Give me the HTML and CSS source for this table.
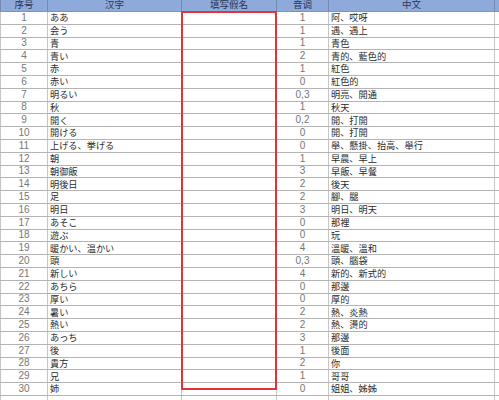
FILE: index.html
```html
<!DOCTYPE html>
<html lang="ja">
<head>
<meta charset="utf-8">
<title>単語表</title>
<link rel="stylesheet" href="styles.css">
</head>
<body>
<div class="sheet">
  <div class="row head"><div class="c n">序号</div><div class="c">汉字</div><div class="c">填写假名</div><div class="c">音调</div><div class="c">中文</div><div class="c e"></div></div>
  <div class="row"><div class="c n">1</div><div class="c k">ああ</div><div class="c"></div><div class="c n">1</div><div class="c k">阿、哎呀</div><div class="c e"></div></div>
  <div class="row"><div class="c n">2</div><div class="c k">会う</div><div class="c"></div><div class="c n">1</div><div class="c k">遇、遇上</div><div class="c e"></div></div>
  <div class="row"><div class="c n">3</div><div class="c k">青</div><div class="c"></div><div class="c n">1</div><div class="c k">青色</div><div class="c e"></div></div>
  <div class="row"><div class="c n">4</div><div class="c k">青い</div><div class="c"></div><div class="c n">2</div><div class="c k">青的、藍色的</div><div class="c e"></div></div>
  <div class="row"><div class="c n">5</div><div class="c k">赤</div><div class="c"></div><div class="c n">1</div><div class="c k">紅色</div><div class="c e"></div></div>
  <div class="row"><div class="c n">6</div><div class="c k">赤い</div><div class="c"></div><div class="c n">0</div><div class="c k">紅色的</div><div class="c e"></div></div>
  <div class="row"><div class="c n">7</div><div class="c k">明るい</div><div class="c"></div><div class="c n">0,3</div><div class="c k">明亮、開通</div><div class="c e"></div></div>
  <div class="row"><div class="c n">8</div><div class="c k">秋</div><div class="c"></div><div class="c n">1</div><div class="c k">秋天</div><div class="c e"></div></div>
  <div class="row"><div class="c n">9</div><div class="c k">開く</div><div class="c"></div><div class="c n">0,2</div><div class="c k">開、打開</div><div class="c e"></div></div>
  <div class="row"><div class="c n">10</div><div class="c k">開ける</div><div class="c"></div><div class="c n">0</div><div class="c k">開、打開</div><div class="c e"></div></div>
  <div class="row"><div class="c n">11</div><div class="c k">上げる、挙げる</div><div class="c"></div><div class="c n">0</div><div class="c k">舉、懸掛、抬高、舉行</div><div class="c e"></div></div>
  <div class="row"><div class="c n">12</div><div class="c k">朝</div><div class="c"></div><div class="c n">1</div><div class="c k">早晨、早上</div><div class="c e"></div></div>
  <div class="row"><div class="c n">13</div><div class="c k">朝御飯</div><div class="c"></div><div class="c n">3</div><div class="c k">早飯、早餐</div><div class="c e"></div></div>
  <div class="row"><div class="c n">14</div><div class="c k">明後日</div><div class="c"></div><div class="c n">2</div><div class="c k">後天</div><div class="c e"></div></div>
  <div class="row"><div class="c n">15</div><div class="c k">足</div><div class="c"></div><div class="c n">2</div><div class="c k">腳、腿</div><div class="c e"></div></div>
  <div class="row"><div class="c n">16</div><div class="c k">明日</div><div class="c"></div><div class="c n">3</div><div class="c k">明日、明天</div><div class="c e"></div></div>
  <div class="row"><div class="c n">17</div><div class="c k">あそこ</div><div class="c"></div><div class="c n">0</div><div class="c k">那裡</div><div class="c e"></div></div>
  <div class="row"><div class="c n">18</div><div class="c k">遊ぶ</div><div class="c"></div><div class="c n">0</div><div class="c k">玩</div><div class="c e"></div></div>
  <div class="row"><div class="c n">19</div><div class="c k">暖かい、温かい</div><div class="c"></div><div class="c n">4</div><div class="c k">溫暖、溫和</div><div class="c e"></div></div>
  <div class="row"><div class="c n">20</div><div class="c k">頭</div><div class="c"></div><div class="c n">0,3</div><div class="c k">頭、腦袋</div><div class="c e"></div></div>
  <div class="row"><div class="c n">21</div><div class="c k">新しい</div><div class="c"></div><div class="c n">4</div><div class="c k">新的、新式的</div><div class="c e"></div></div>
  <div class="row"><div class="c n">22</div><div class="c k">あちら</div><div class="c"></div><div class="c n">0</div><div class="c k">那邊</div><div class="c e"></div></div>
  <div class="row"><div class="c n">23</div><div class="c k">厚い</div><div class="c"></div><div class="c n">0</div><div class="c k">厚的</div><div class="c e"></div></div>
  <div class="row"><div class="c n">24</div><div class="c k">暑い</div><div class="c"></div><div class="c n">2</div><div class="c k">熱、炎熱</div><div class="c e"></div></div>
  <div class="row"><div class="c n">25</div><div class="c k">熱い</div><div class="c"></div><div class="c n">2</div><div class="c k">熱、燙的</div><div class="c e"></div></div>
  <div class="row"><div class="c n">26</div><div class="c k">あっち</div><div class="c"></div><div class="c n">3</div><div class="c k">那邊</div><div class="c e"></div></div>
  <div class="row"><div class="c n">27</div><div class="c k">後</div><div class="c"></div><div class="c n">1</div><div class="c k">後面</div><div class="c e"></div></div>
  <div class="row"><div class="c n">28</div><div class="c k">貴方</div><div class="c"></div><div class="c n">2</div><div class="c k">你</div><div class="c e"></div></div>
  <div class="row"><div class="c n">29</div><div class="c k">兄</div><div class="c"></div><div class="c n">1</div><div class="c k">哥哥</div><div class="c e"></div></div>
  <div class="row"><div class="c n">30</div><div class="c k">姉</div><div class="c"></div><div class="c n">0</div><div class="c k">姐姐、姊姊</div><div class="c e"></div></div>
  <div class="row"><div class="c n"></div><div class="c k"></div><div class="c"></div><div class="c n"></div><div class="c k"></div><div class="c e"></div></div>
  <div class="mark"></div>
</div>
</body>
</html>
```

FILE: styles.css
```css
html, body {
  margin: 0;
  padding: 0;
  background: #ffffff;
  overflow: hidden;
}

.sheet {
  position: relative;
  margin-top: -3px;
  font-family: "Noto Sans CJK JP", "Noto Sans CJK SC", sans-serif;
  font-size: 9.2px;
  color: #2b2b2b;
}

.row {
  display: grid;
  grid-template-columns: 48px 134px 95px 52px 166px 1fr;
  height: 12.8px;
  box-sizing: border-box;
  border-bottom: 1px solid #b4b4b4;
}

.c {
  display: flex;
  align-items: center;
  box-sizing: border-box;
  border-right: 1px solid #c6c6c6;
  line-height: 1;
  white-space: nowrap;
  overflow: hidden;
}

.row > .c:first-child {
  border-left: 1px solid #c6c6c6;
}

.n {
  justify-content: center;
  font-family: "Liberation Sans", "Noto Sans CJK SC", sans-serif;
  font-size: 10px;
  color: #767676;
}

.k {
  padding-left: 2px;
}

.head {
  height: 15px;
  background: #8eaadb;
  border-bottom: 1px solid #7f93b8;
}

.head .c {
  justify-content: center;
  font-family: "Noto Sans CJK SC", sans-serif;
  font-size: 9.5px;
  padding-top: 1px;
  color: #2c3550;
  border-right-color: #7588b0;
}

.head .c:first-child {
  border-left-color: #7588b0;
}

.c.e {
  border-right: none;
}

.mark {
  position: absolute;
  left: 181px;
  top: 14px;
  width: 96px;
  height: 379px;
  box-sizing: border-box;
  border: 2px solid #e0343a;
}
```
